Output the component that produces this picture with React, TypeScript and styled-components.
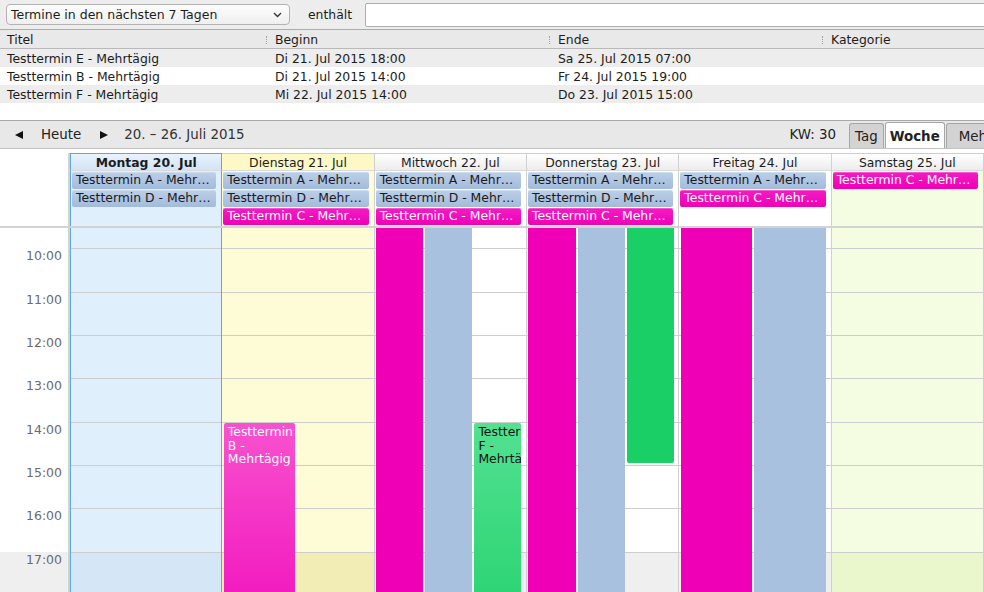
import React, { useLayoutEffect, useRef } from 'react';
import styled, { createGlobalStyle, css } from 'styled-components';

const HOUR = 43.33;
const COLS = '70px repeat(7, 152.33px)';
const COL_INNER = 151.33;

type Kind = 'selected' | 'today' | 'normal' | 'weekend';
type Tone = 'blue' | 'pink' | 'green';

interface ITimed {
  title: string;
  tone: Tone;
  start: number;
  end: number;
  lane: number;
  lanes: number;
}

interface IAllDay {
  title: string;
  tone: Tone;
}

interface IDay {
  label: string;
  kind: Kind;
  allDay: IAllDay[];
  timed: ITimed[];
}

const dayTones: Record<Kind, { day: string; off: string }> = {
  selected: { day: '#dfeffc', off: '#d5e6f6' },
  today: { day: '#fefbd7', off: '#f2ecb5' },
  normal: { day: '#ffffff', off: '#efefef' },
  weekend: { day: '#f4fde2', off: '#eaf7cc' },
};

const eventTones: Record<Tone, { top: string; base: string; text: string }> = {
  blue: { top: '#b8cce6', base: '#a8c1df', text: '#1a1a1a' },
  pink: { top: '#f852cf', base: '#ef00b7', text: '#ffffff' },
  green: { top: '#52e191', base: '#1bcf67', text: '#111111' },
};

const isWorking = (h: number) => h >= 8 && h < 17;

const GlobalStyle = createGlobalStyle`
  * { box-sizing: border-box; }
  html, body {
    margin: 0;
    padding: 0;
    background: #fff;
    overflow: hidden;
  }
  body {
    font-family: "DejaVu Sans", "Liberation Sans", sans-serif;
    font-size: 12.4px;
    color: #1c1c1c;
  }
`;

const Window = styled.div`
  width: 1136px;
  height: 592px;
  display: flex;
  flex-direction: column;
  overflow: hidden;
`;

/* unifinder filter */
const FilterBar = styled.div`
  height: 30px;
  flex-shrink: 0;
  display: flex;
  align-items: center;
  padding: 0 6px;
  background: #ededed;
  border-bottom: 1px solid #ababab;
`;

const Select = styled.div`
  width: 284px;
  height: 21px;
  display: flex;
  align-items: center;
  padding: 0 7px 0 4px;
  border: 1px solid #b3b3b3;
  border-radius: 4px;
  background: linear-gradient(#fdfdfd, #efefef);
  font-size: 12.5px;

  svg {
    margin-left: auto;
  }
`;

const Label = styled.span`
  margin: 0 13px 0 18px;
`;

const SearchInput = styled.input`
  flex: 1;
  height: 24px;
  border: 1px solid #aeaeae;
  border-radius: 2px;
  background: #fff;
  outline: none;
`;

/* event list */
const ListHeader = styled.div`
  flex-shrink: 0;
  display: grid;
  grid-template-columns: 266px 283px 273px 1fr;
  height: 19px;
  background: #e9e9e9;
  border-bottom: 1px solid #b9b9b9;
`;

const HeaderCell = styled.div<{ $sep?: boolean }>`
  position: relative;
  display: flex;
  align-items: center;
  padding-left: ${(p) => (p.$sep ? 9 : 7)}px;

  ${(p) =>
    p.$sep &&
    css`
      &::before {
        content: '';
        position: absolute;
        left: 0;
        top: 6px;
        height: 8px;
        border-left: 1px dotted #a0a0a0;
      }
    `}
`;

const ListBody = styled.div`
  flex-shrink: 0;
  height: 71px;
  background: #fff;
`;

const Row = styled.div<{ $odd: boolean }>`
  display: grid;
  grid-template-columns: 266px 283px 273px 1fr;
  height: 18px;
  align-items: center;
  background: ${(p) => (p.$odd ? '#ededed' : '#ffffff')};
`;

const Cell = styled.div<{ $first?: boolean }>`
  padding-left: ${(p) => (p.$first ? 7 : 9)}px;
  white-space: nowrap;
  overflow: hidden;
`;

/* calendar toolbar */
const Toolbar = styled.div`
  flex-shrink: 0;
  height: 29px;
  display: flex;
  align-items: center;
  background: #e8e8e8;
  border-top: 1px solid #a9a9a9;
  border-bottom: 1px solid #c3c3c3;
  font-size: 13.4px;
  color: #222;
`;

const NavButton = styled.span<{ $gap: number }>`
  display: flex;
  align-items: center;
  margin-left: ${(p) => p.$gap}px;
`;

const RangeTitle = styled.span`
  margin-left: 15px;
  color: #333;
`;

const WeekNumber = styled.span`
  margin-left: auto;
  margin-right: 13px;
`;

const TabStrip = styled.div`
  align-self: stretch;
  width: 287px;
  display: flex;
  align-items: flex-end;
  overflow: hidden;
`;

const Tab = styled.div<{ $active?: boolean }>`
  flex-shrink: 0;
  height: 25px;
  display: flex;
  align-items: center;
  padding: 0 ${(p) => (p.$active ? 4 : 5)}px;
  margin-right: 1px;
  border: 1px solid #a6a6a6;
  border-bottom: none;
  border-radius: 3px 3px 0 0;
  background: #d3d3d3;
  white-space: nowrap;

  ${(p) =>
    p.$active &&
    css`
      height: 27px;
      margin-bottom: -1px;
      background: #fff;
      font-weight: bold;
      position: relative;
    `}
`;

const WideTab = styled(Tab)`
  padding: 0 12px;
`;

/* week view */
const WeekView = styled.div`
  flex: 1;
  min-height: 0;
  display: flex;
  flex-direction: column;
  padding-top: 4px;
`;

const HeaderRow = styled.div`
  flex-shrink: 0;
  display: grid;
  grid-template-columns: ${COLS};
  height: 18px;
`;

const AllDayRow = styled.div`
  flex-shrink: 0;
  display: grid;
  grid-template-columns: ${COLS};
  height: 55px;
`;

const GutterCell = styled.div`
  border-right: 2px solid #d2d2d2;
  background: #fff;
`;

const columnBorders = (kind: Kind) =>
  kind === 'selected'
    ? css`
        border-left: 1px solid #5ba9e1;
        border-right: 1px solid #5ba9e1;
      `
    : css`
        border-right: 1px solid #d0d0d0;
      `;

const DayHeader = styled.div<{ $kind: Kind }>`
  display: flex;
  align-items: center;
  justify-content: center;
  white-space: nowrap;
  overflow: hidden;
  border-top: 1px solid #cfcfcf;
  border-bottom: 1px solid #dadada;
  background: linear-gradient(#ffffff, #ececec);
  ${(p) => columnBorders(p.$kind)}

  ${(p) =>
    p.$kind === 'selected' &&
    css`
      font-weight: bold;
      border-top-color: #5ba9e1;
      background: linear-gradient(#e9f3fd, #d2e4f6);
    `}
  ${(p) =>
    p.$kind === 'today' &&
    css`
      background: #fdf9c6;
    `}
`;

const AllDayCell = styled.div<{ $kind: Kind }>`
  display: flex;
  flex-direction: column;
  gap: 1px;
  padding: 1px 5px 0 1px;
  background: ${(p) => dayTones[p.$kind].day};
  ${(p) => columnBorders(p.$kind)}
`;

const AllDayEvent = styled.div<{ $tone: Tone }>`
  height: 17px;
  line-height: 16px;
  padding: 0 4px;
  border-radius: 2px;
  white-space: nowrap;
  overflow: hidden;
  text-overflow: ellipsis;
  color: ${(p) => eventTones[p.$tone].text};
  background: ${(p) =>
    p.$tone === 'pink'
      ? 'linear-gradient(#f41cc3, #ee00b6)'
      : 'linear-gradient(#bccfe8, #a3bbdb)'};
  box-shadow: inset 0 1px 0 rgba(255, 255, 255, 0.25);
`;

const Divider = styled.div`
  flex-shrink: 0;
  height: 2px;
  background: #d3d3d3;
`;

const Scroller = styled.div`
  flex: 1;
  min-height: 0;
  overflow: hidden;
`;

const TimeGrid = styled.div`
  display: grid;
  grid-template-columns: ${COLS};
  height: ${24 * HOUR}px;
`;

const Gutter = styled.div`
  border-right: 2px solid #d2d2d2;
`;

const GutterHour = styled.div<{ $off: boolean }>`
  height: ${HOUR}px;
  padding: 1px 6px 0 0;
  text-align: right;
  font-size: 12.5px;
  line-height: 14px;
  color: #6b6b6b;
  background: ${(p) => (p.$off ? '#efefef' : '#ffffff')};
`;

const DayColumn = styled.div<{ $kind: Kind }>`
  position: relative;
  ${(p) => columnBorders(p.$kind)}
`;

const HourCell = styled.div<{ $kind: Kind; $off: boolean }>`
  height: ${HOUR}px;
  border-top: 1px solid #cdcdcd;
  background: ${(p) => (p.$off ? dayTones[p.$kind].off : dayTones[p.$kind].day)};
`;

const TimedEvent = styled.div<{ $tone: Tone }>`
  position: absolute;
  padding: 2px 2px 0 4px;
  border-radius: 2px;
  overflow: hidden;
  line-height: 13.5px;
  color: ${(p) => eventTones[p.$tone].text};
  background: linear-gradient(
    180deg,
    ${(p) => eventTones[p.$tone].top} 0,
    ${(p) => eventTones[p.$tone].base} 260px
  );
`;

const Triangle = ({ dir }: { dir: 'left' | 'right' }) => (
  <svg width="10" height="10" viewBox="0 0 10 10">
    <path d={dir === 'left' ? 'M9 1 L1 5 L9 9 Z' : 'M1 1 L9 5 L1 9 Z'} fill="#111" />
  </svg>
);

const A: IAllDay = { title: 'Testtermin A - Mehrtägig', tone: 'blue' };
const C: IAllDay = { title: 'Testtermin C - Mehrtägig', tone: 'pink' };
const D: IAllDay = { title: 'Testtermin D - Mehrtägig', tone: 'blue' };

const B = 'Testtermin B - Mehrtägig';
const E = 'Testtermin E - Mehrtägig';
const F = 'Testtermin F - Mehrtägig';

const days: IDay[] = [
  { label: 'Montag 20. Jul', kind: 'selected', allDay: [A, D], timed: [] },
  {
    label: 'Dienstag 21. Jul',
    kind: 'today',
    allDay: [A, D, C],
    timed: [
      { title: B, tone: 'pink', start: 14, end: 24, lane: 0, lanes: 2 },
      { title: E, tone: 'blue', start: 18, end: 24, lane: 1, lanes: 2 },
    ],
  },
  {
    label: 'Mittwoch 22. Jul',
    kind: 'normal',
    allDay: [A, D, C],
    timed: [
      { title: B, tone: 'pink', start: 0, end: 24, lane: 0, lanes: 3 },
      { title: E, tone: 'blue', start: 0, end: 24, lane: 1, lanes: 3 },
      { title: F, tone: 'green', start: 14, end: 24, lane: 2, lanes: 3 },
    ],
  },
  {
    label: 'Donnerstag 23. Jul',
    kind: 'normal',
    allDay: [A, D, C],
    timed: [
      { title: B, tone: 'pink', start: 0, end: 24, lane: 0, lanes: 3 },
      { title: E, tone: 'blue', start: 0, end: 24, lane: 1, lanes: 3 },
      { title: F, tone: 'green', start: 0, end: 15, lane: 2, lanes: 3 },
    ],
  },
  {
    label: 'Freitag 24. Jul',
    kind: 'normal',
    allDay: [A, C],
    timed: [
      { title: B, tone: 'pink', start: 0, end: 19, lane: 0, lanes: 2 },
      { title: E, tone: 'blue', start: 0, end: 24, lane: 1, lanes: 2 },
    ],
  },
  {
    label: 'Samstag 25. Jul',
    kind: 'weekend',
    allDay: [C],
    timed: [{ title: E, tone: 'blue', start: 0, end: 7, lane: 0, lanes: 1 }],
  },
  { label: 'Sonntag 26. Jul', kind: 'weekend', allDay: [], timed: [] },
];

const listRows = [
  ['Testtermin E - Mehrtägig', 'Di 21. Jul 2015 18:00', 'Sa 25. Jul 2015 07:00', ''],
  ['Testtermin B - Mehrtägig', 'Di 21. Jul 2015 14:00', 'Fr 24. Jul 2015 19:00', ''],
  ['Testtermin F - Mehrtägig', 'Mi 22. Jul 2015 14:00', 'Do 23. Jul 2015 15:00', ''],
];

const hours = Array.from({ length: 24 }, (_, h) => h);

const eventBox = (ev: ITimed) => {
  const pitch = (COL_INNER - 4) / ev.lanes;
  const top = ev.start === 0 ? 0 : ev.start * HOUR + 1.5;
  const bottom = ev.end === 24 ? 24 * HOUR : ev.end * HOUR - 1.5;
  return {
    top,
    height: bottom - top,
    left: 1.5 + ev.lane * pitch,
    width: pitch - 2,
  };
};

export default function App() {
  const scroller = useRef<HTMLDivElement>(null);

  useLayoutEffect(() => {
    if (scroller.current) scroller.current.scrollTop = 10 * HOUR - 20;
  }, []);

  return (
    <Window>
      <GlobalStyle />
      <FilterBar>
        <Select>
          Termine in den nächsten 7 Tagen
          <svg width="9" height="6" viewBox="0 0 9 6">
            <path d="M1 1 L4.5 4.5 L8 1" fill="none" stroke="#333" strokeWidth="1.4" />
          </svg>
        </Select>
        <Label>enthält</Label>
        <SearchInput />
      </FilterBar>

      <ListHeader>
        <HeaderCell>Titel</HeaderCell>
        <HeaderCell $sep>Beginn</HeaderCell>
        <HeaderCell $sep>Ende</HeaderCell>
        <HeaderCell $sep>Kategorie</HeaderCell>
      </ListHeader>
      <ListBody>
        {listRows.map((r, i) => (
          <Row key={i} $odd={i % 2 === 0}>
            {r.map((c, j) => (
              <Cell key={j} $first={j === 0}>
                {c}
              </Cell>
            ))}
          </Row>
        ))}
      </ListBody>

      <Toolbar>
        <NavButton $gap={14}>
          <Triangle dir="left" />
        </NavButton>
        <NavButton $gap={17}>Heute</NavButton>
        <NavButton $gap={18}>
          <Triangle dir="right" />
        </NavButton>
        <RangeTitle>20. – 26. Juli 2015</RangeTitle>
        <WeekNumber>KW: 30</WeekNumber>
        <TabStrip>
          <Tab>Tag</Tab>
          <Tab $active>Woche</Tab>
          <WideTab>Mehrere Wochen</WideTab>
          <Tab>Monat</Tab>
        </TabStrip>
      </Toolbar>

      <WeekView>
        <HeaderRow>
          <GutterCell />
          {days.map((d) => (
            <DayHeader key={d.label} $kind={d.kind}>
              {d.label}
            </DayHeader>
          ))}
        </HeaderRow>
        <AllDayRow>
          <GutterCell />
          {days.map((d) => (
            <AllDayCell key={d.label} $kind={d.kind}>
              {d.allDay.map((ev) => (
                <AllDayEvent key={ev.title} $tone={ev.tone}>
                  {ev.title}
                </AllDayEvent>
              ))}
            </AllDayCell>
          ))}
        </AllDayRow>
        <Divider />
        <Scroller ref={scroller}>
          <TimeGrid>
            <Gutter>
              {hours.map((h) => (
                <GutterHour key={h} $off={!isWorking(h)}>
                  {String(h).padStart(2, '0')}:00
                </GutterHour>
              ))}
            </Gutter>
            {days.map((d) => (
              <DayColumn key={d.label} $kind={d.kind}>
                {hours.map((h) => (
                  <HourCell key={h} $kind={d.kind} $off={!isWorking(h)} />
                ))}
                {d.timed.map((ev) => (
                  <TimedEvent key={ev.title} $tone={ev.tone} style={eventBox(ev)}>
                    {ev.title}
                  </TimedEvent>
                ))}
              </DayColumn>
            ))}
          </TimeGrid>
        </Scroller>
      </WeekView>
    </Window>
  );
}
